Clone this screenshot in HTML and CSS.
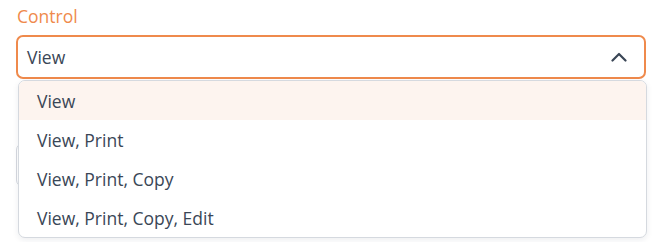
FILE: index.html
```html
<!DOCTYPE html>
<html lang="en">
<head>
  <meta charset="UTF-8" />
  <meta name="viewport" content="width=device-width, initial-scale=1" />
  <title>Control select</title>
  <link rel="stylesheet" href="styles.css">
</head>
<body>

  <div class="form">
    <label class="label">Control</label>

    <div class="field">
      <div class="select open">
        <span class="select-value">View</span>
        <svg class="chevron" width="16" height="10" viewBox="0 0 16 10">
          <path d="M1.5 8.5 L8 2 L14.5 8.5" fill="none" stroke="currentColor" stroke-width="2.2" stroke-linecap="round" stroke-linejoin="round" />
        </svg>
      </div>

      <!-- Выпадающий список -->
      <ul class="menu">
        <li class="option active">View</li>
        <li class="option">View, Print</li>
        <li class="option">View, Print, Copy</li>
        <li class="option">View, Print, Copy, Edit</li>
      </ul>
    </div>

    <div class="input"></div>
  </div>

</body>
</html>
```

FILE: styles.css
```css
/* --- Base --- */
:root {
  --orange: #ef8a4c;
  --text: #3a4656;
  --border: #d5d9df;
  --hover: #fdf4ef;
}
* {
  margin: 0;
  padding: 0;
  box-sizing: border-box;
}
html, body {
  min-height: 242px;
}
body {
  font-family: 'Open Sans', sans-serif;
  background: #fff;
  color: var(--text);
}
.form {
  padding: 4px 15px 60px 16px;
}

/* --- Label --- */
.label {
  display: block;
  color: var(--orange);
  font-size: 17.5px;
  line-height: 24px;
  padding-left: 1px;
  margin-bottom: 7px;
}

/* --- Select --- */
.field {
  position: relative;
}
.select {
  height: 44px;
  border: 2px solid var(--orange);
  border-radius: 7px;
  display: flex;
  align-items: center;
  justify-content: space-between;
  padding: 0 17px 0 9px;
  font-size: 17.5px;
}
.chevron {
  color: var(--text);
  display: block;
}

/* --- Menu --- */
.menu {
  position: absolute;
  top: 45px;
  left: 2px;
  right: -1px;
  list-style: none;
  background: #fff;
  border: 1px solid var(--border);
  border-radius: 7px;
  box-shadow: 0 2px 6px rgba(30, 40, 60, 0.08);
  overflow: hidden;
  z-index: 2;
}
.option {
  height: 39px;
  display: flex;
  align-items: center;
  padding-left: 18px;
  font-size: 17.5px;
}
.option.active {
  background: var(--hover);
}

/* --- Next input (under the menu) --- */
.input {
  margin-top: 64px;
  height: 44px;
  border: 1px solid var(--border);
  border-radius: 7px;
}
```
